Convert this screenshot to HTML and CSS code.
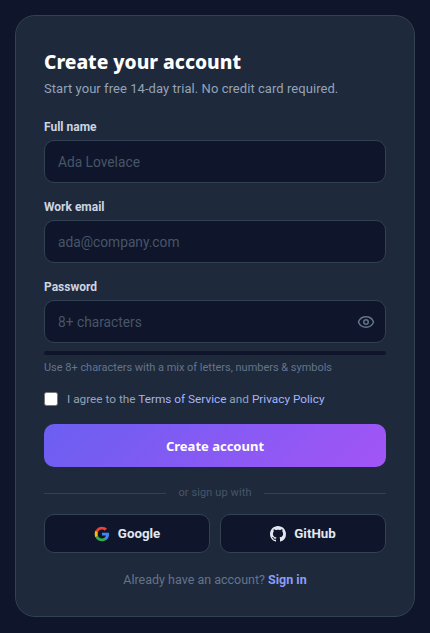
FILE: index.html
```html
<!DOCTYPE html>
<html lang="en">
<head>
<meta charset="utf-8">
<title>Create your account</title>
<link rel="stylesheet" href="styles.css">
</head>
<body>
<main class="card">
  <h1 class="title">Create your account</h1>
  <p class="subtitle">Start your free 14-day trial. No credit card required.</p>
  <form class="form">
    <div class="field">
      <label class="label">Full name</label>
      <div class="input"><span class="placeholder">Ada Lovelace</span></div>
    </div>
    <div class="field">
      <label class="label">Work email</label>
      <div class="input"><span class="placeholder">ada@company.com</span></div>
    </div>
    <div class="field field-pw">
      <label class="label">Password</label>
      <div class="input input-pw">
        <span class="placeholder">8+ characters</span>
        <svg class="eye" viewBox="0 0 24 24" fill="none" stroke="currentColor" stroke-width="2" stroke-linecap="round" stroke-linejoin="round"><path d="M2.06 12.35a1 1 0 0 1 0-.7 10.75 10.75 0 0 1 19.88 0 1 1 0 0 1 0 .7 10.75 10.75 0 0 1-19.88 0"/><circle cx="12" cy="12" r="3"/></svg>
      </div>
      <div class="meter"></div>
      <p class="hint">Use 8+ characters with a mix of letters, numbers &amp; symbols</p>
    </div>
    <div class="agree">
      <span class="check"></span>
      <span>I agree to the <a class="link">Terms of Service</a> and <a class="link">Privacy Policy</a></span>
    </div>
    <button class="primary" type="button">Create account</button>
  </form>
  <div class="divider"><span class="rule"></span><span class="divider-text">or sign up with</span><span class="rule"></span></div>
  <div class="social">
    <button class="social-btn" type="button">
      <svg class="social-icon" viewBox="0 0 24 24"><path fill="#4285F4" d="M22.56 12.25c0-.78-.07-1.53-.2-2.25H12v4.26h5.92c-.26 1.37-1.04 2.53-2.21 3.31v2.77h3.57c2.08-1.92 3.28-4.74 3.28-8.09z"/><path fill="#34A853" d="M12 23c2.97 0 5.46-.98 7.28-2.66l-3.57-2.77c-.98.66-2.23 1.06-3.71 1.06-2.86 0-5.29-1.93-6.16-4.53H2.18v2.84C3.99 20.53 7.7 23 12 23z"/><path fill="#FBBC05" d="M5.84 14.09c-.22-.66-.35-1.36-.35-2.09s.13-1.43.35-2.09V7.07H2.18C1.43 8.55 1 10.22 1 12s.43 3.45 1.18 4.93l3.66-2.84z"/><path fill="#EA4335" d="M12 5.38c1.62 0 3.06.56 4.21 1.64l3.15-3.15C17.45 2.09 14.97 1 12 1 7.7 1 3.99 3.47 2.18 7.07l3.66 2.84c.87-2.6 3.3-4.53 6.16-4.53z"/></svg>
      Google
    </button>
    <button class="social-btn" type="button">
      <svg class="social-icon" viewBox="0 0 16 16" fill="currentColor"><path d="M8 0C3.58 0 0 3.58 0 8c0 3.54 2.29 6.53 5.47 7.59.4.07.55-.17.55-.38 0-.19-.01-.82-.01-1.49-2.01.37-2.53-.49-2.69-.94-.09-.23-.48-.94-.82-1.13-.28-.15-.68-.52-.01-.53.63-.01 1.08.58 1.23.82.72 1.21 1.87.87 2.33.66.07-.52.28-.87.51-1.07-1.78-.2-3.64-.89-3.64-3.95 0-.87.31-1.59.82-2.15-.08-.2-.36-1.02.08-2.12 0 0 .67-.21 2.2.82.64-.18 1.32-.27 2-.27s1.36.09 2 .27c1.53-1.04 2.2-.82 2.2-.82.44 1.1.16 1.92.08 2.12.51.56.82 1.27.82 2.15 0 3.07-1.87 3.75-3.65 3.95.29.25.54.73.54 1.48 0 1.07-.01 1.93-.01 2.2 0 .21.15.46.55.38A8.01 8.01 0 0 0 16 8c0-4.42-3.58-8-8-8z"/></svg>
      GitHub
    </button>
  </div>
  <p class="footer">Already have an account? <a class="signin">Sign in</a></p>
</main>
</body>
</html>
```

FILE: styles.css
```css
* { box-sizing: border-box; }
html, body { margin: 0; height: 100%; }
body {
  background: #0f152a;
  font-family: Roboto, sans-serif;
  padding: 15px;
  overflow: hidden;
}
.card {
  width: 400px;
  height: 602px;
  background: #1e293b;
  border: 1px solid #334155;
  border-radius: 20px;
  padding: 32px 28px;
}
.title {
  margin: 0;
  font-family: "Noto Sans", sans-serif;
  font-size: 19.2px;
  line-height: 28px;
  font-weight: 800;
  color: #fff;
}
.subtitle {
  margin: 4px 0 0;
  font-size: 13px;
  line-height: 18px;
  letter-spacing: 0.055px;
  color: #94a3b8;
}
.form { display: flex; flex-direction: column; margin-top: 21px; }
.field { display: flex; flex-direction: column; margin-bottom: 16px; }
.field-pw { margin-bottom: 0; }
.label {
  font-size: 12px;
  line-height: 16px;
  font-weight: 700;
  color: #cbd5e1;
  margin-bottom: 5px;
}
.input {
  height: 43px;
  background: #0f152a;
  border: 1px solid #334155;
  border-radius: 10px;
  padding: 0 13px;
  display: flex;
  align-items: center;
  justify-content: space-between;
}
.input-pw { padding-right: 10px; }
.placeholder { font-size: 13.75px; line-height: 18px; padding-top: 1px; color: #475569; }
.eye { width: 18px; height: 18px; color: #64748b; }
.meter { height: 4px; border-radius: 2px; background: #0f152a; margin-top: 8px; }
.hint { margin: 5px 0 0; font-size: 11px; line-height: 16px; letter-spacing: -0.02px; color: #64748b; }
.agree {
  display: flex;
  align-items: center;
  gap: 9px;
  margin-top: 15px;
  font-size: 11.8px;
  line-height: 16px;
  color: #94a3b8;
}
.check {
  width: 14px;
  height: 14px;
  flex: none;
  background: #fff;
  border: 1px solid #767676;
  border-radius: 2.5px;
}
.link { color: #a5b4fc; }
.primary {
  margin-top: 17px;
  height: 43px;
  border: 0;
  border-radius: 10px;
  background: linear-gradient(135deg, #6b5ff1, #a255f6);
  color: #fff;
  font: 700 13px "Noto Sans", sans-serif;
}
.divider {
  display: flex;
  align-items: center;
  gap: 12px;
  margin-top: 18px;
  font-size: 11px;
  line-height: 16px;
  letter-spacing: 0.1px;
  color: #475569;
}
.rule { flex: 1; height: 1px; background: #334155; }
.social { display: grid; grid-template-columns: 1fr 1fr; gap: 10px; margin-top: 13px; }
.social-btn {
  height: 39px;
  background: #0f152a;
  border: 1px solid #334155;
  border-radius: 10px;
  color: #e2e8f0;
  font: 700 13.3px Roboto, sans-serif;
  display: flex;
  align-items: center;
  justify-content: center;
  gap: 8px;
}
.social-icon { width: 16px; height: 16px; flex: none; }
.footer { margin: 17px 0 0; text-align: center; font-size: 12.5px; line-height: 19px; color: #64748b; }
.signin { color: #8b9cf9; font-weight: 700; }
```
